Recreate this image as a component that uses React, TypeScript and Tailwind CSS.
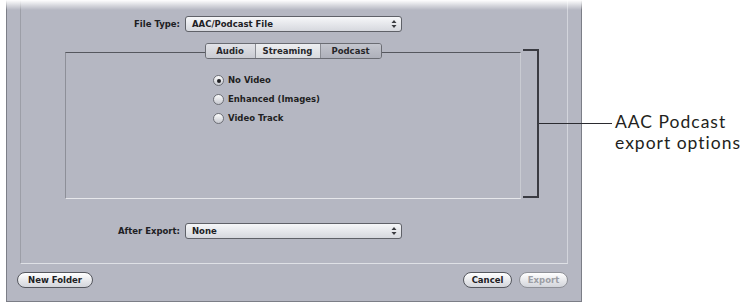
import React from "react"

const ui = { fontFamily: '"DejaVu Sans", "Liberation Sans", sans-serif' }

function Select({ value }: { value: string }) {
  return (
    <div className="flex h-[16px] w-[217px] items-center justify-between rounded-[3px] border border-[#5f6168] bg-linear-to-b from-[#f6f7f9] to-[#d6d8de] pl-[6px] pr-[4px]">
      <span className="text-[8.5px] font-bold leading-none text-[#202024]">{value}</span>
      <svg width="6" height="10" viewBox="0 0 6 10">
        <path d="M3 1 L5.5 4 H0.5Z M3 9 L5.5 6 H0.5Z" fill="#3a3b40" />
      </svg>
    </div>
  )
}

function Radio({ label, checked }: { label: string; checked?: boolean }) {
  return (
    <div className="flex h-[19px] items-center gap-[4px]">
      <span className="flex h-[11px] w-[11px] items-center justify-center rounded-full border border-[#6d6f76] bg-linear-to-b from-[#fdfdfd] to-[#c6c8cf]">
        {checked && <span className="h-[4px] w-[4px] rounded-full bg-[#202024]" />}
      </span>
      <span className="text-[8.5px] font-bold leading-none text-[#1f1f22]">{label}</span>
    </div>
  )
}

function Button({ label, w, disabled }: { label: string; w: string; disabled?: boolean }) {
  return (
    <div
      className={`flex h-[16px] items-center justify-center rounded-full border bg-linear-to-b from-white to-[#d3d5db] text-[8.5px] font-bold leading-none ${w} ${
        disabled ? "border-[#8f9198] text-[#9c9ea5]" : "border-[#55575e] text-[#202024]"
      }`}
    >
      {label}
    </div>
  )
}

function Tab({ label, w, cls }: { label: string; w: string; cls: string }) {
  return (
    <div className={`flex h-full items-center justify-center text-[8.5px] font-bold leading-none text-[#26262a] ${w} ${cls}`}>
      {label}
    </div>
  )
}

export default function App() {
  return (
    <div className="relative flex h-[306px] w-[745px] overflow-hidden bg-white" style={ui}>
      {/* dialog */}
      <div className="ml-[6px] flex h-[302px] w-[576px] flex-col border-x border-b border-[#7c7e87] bg-[#b5b7c2]">
        <div className="mx-[13px] flex h-[264px] flex-col border-x border-b border-l-[#9c9ea7] border-r-[#d3d5dc] border-b-[#dfe1e6]">
          <div className="flex items-center pt-[16px]">
            <div className="w-[159px] text-right text-[8.5px] font-bold leading-none text-[#202024]">File Type:</div>
            <div className="ml-[5px]">
              <Select value="AAC/Podcast File" />
            </div>
          </div>

          <div className="ml-[44px] mt-[11px] flex w-[456px] flex-col">
            <div className="relative z-10 flex h-[16px] justify-center">
              <div className="flex h-full overflow-hidden rounded-[3px] border border-[#6a6c73]">
                <Tab label="Audio" w="w-[50px]" cls="bg-linear-to-b from-[#e2e3e8] to-[#c9cbd2] border-r border-[#8a8c93]" />
                <Tab label="Streaming" w="w-[65px]" cls="bg-linear-to-b from-[#eeeff2] to-[#d8dade] border-r border-[#8a8c93]" />
                <Tab label="Podcast" w="w-[60px]" cls="bg-linear-to-b from-[#c4c6ce] to-[#aeb0ba]" />
              </div>
            </div>
            <div className="-mt-[7px] h-[147px] border border-t-[#55575e] border-l-[#8d8f98] border-r-[#c9cbd2] border-b-[#e6e7eb] pl-[147px] pt-[18px]">
              <Radio label="No Video" checked />
              <Radio label="Enhanced (Images)" />
              <Radio label="Video Track" />
            </div>
          </div>

          <div className="mt-[24px] flex items-center">
            <div className="w-[159px] text-right text-[8.5px] font-bold leading-none text-[#202024]">After Export:</div>
            <div className="ml-[5px]">
              <Select value="None" />
            </div>
          </div>
        </div>

        <div className="mt-[8px] flex items-center pl-[10px] pr-[13px]">
          <Button label="New Folder" w="w-[76px]" />
          <div className="ml-auto flex gap-[7px]">
            <Button label="Cancel" w="w-[49px]" />
            <Button label="Export" w="w-[49px]" disabled />
          </div>
        </div>
      </div>

      {/* callout text */}
      <div
        className="flex-1 pl-[33px] pt-[111px] text-[17.5px] leading-[21px] tracking-[1px] text-[#231f20]"
        style={{ fontFamily: 'Lato, "Open Sans", sans-serif' }}
      >
        <p>
          AAC Podcast
          <br />
          export options
        </p>
      </div>

      {/* bracket + leader */}
      <div className="absolute left-[523px] top-[49px] h-[149px] w-[16px] border-y-2 border-r-2 border-[#3a3b42]" />
      <div className="absolute left-[539px] top-[123px] h-px w-[73px] bg-[#2b2b30]" />

      {/* top fade */}
      <div className="pointer-events-none absolute left-0 top-0 h-[10px] w-full bg-linear-to-b from-white to-transparent" />
    </div>
  )
}
